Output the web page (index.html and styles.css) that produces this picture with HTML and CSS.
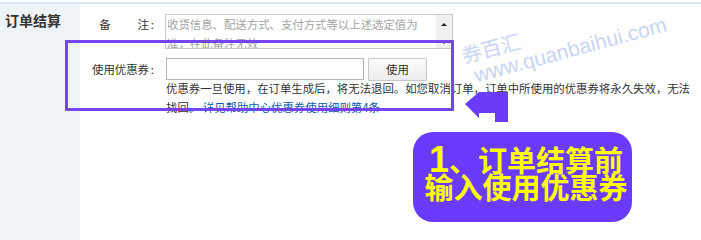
FILE: index.html
```html
<!DOCTYPE html>
<html lang="zh-CN">
<head>
<meta charset="utf-8">
<title>订单结算</title>
<link rel="stylesheet" href="styles.css">
</head>
<body>
<div class="order">
  <div class="side">
    <h2 class="side-title">订单结算</h2>
  </div>
  <div class="main">
    <div class="row row-remark">
      <div class="label">备<span class="label-gap"></span>注<span class="colon">:</span></div>
      <div class="textarea">
        <div class="textarea-text">收货信息、配送方式、支付方式等以上述选定值为准，在此备注无效</div>
        <div class="scrollbar">
          <span class="arrow-up"></span>
          <span class="arrow-down"></span>
        </div>
      </div>
    </div>
    <div class="row row-coupon">
      <div class="label">使用优惠券<span class="colon">:</span></div>
      <div class="coupon-input"></div>
      <button class="btn" type="button">使用</button>
    </div>
    <div class="note">优惠券一旦使用，在订单生成后，将无法退回。如您取消订单，订单中所使用的优惠券将永久失效，无法找回。 <a class="note-link" href="#">详见帮助中心优惠券使用细则第4条</a></div>
  </div>
</div>

<div class="wm wm-cn">券百汇</div>
<div class="wm wm-en">www.quanbaihui.com</div>

<div class="highlight"></div>
<svg class="pointer" width="44" height="31" viewBox="0 0 44 31">
  <polygon points="0,13 14,1 43,1 43,31 30,31 30,22 14,22 14,27" fill="#6a3cf8"/>
</svg>
<div class="callout">
  <div class="callout-line"><span class="callout-num">1</span>、订单结算前</div>
  <div class="callout-line">输入使用优惠券</div>
</div>
</body>
</html>
```
FILE: styles.css
```css
html, body {
  margin: 0;
  padding: 0;
  background: #ffffff;
}

body {
  position: relative;
  width: 701px;
  height: 240px;
  overflow: hidden;
  font-family: "Noto Sans CJK SC", "Liberation Sans", sans-serif;
  font-size: 11.4px;
  color: #333333;
}

.order {
  margin-top: 2px;
  border-top: 2px solid #dce6f2;
  display: flex;
  min-height: 236px;
}

.side {
  width: 80px;
  flex: none;
  background: #eef3f8;
}

.side-title {
  margin: 0;
  padding: 6px 0 0 5px;
  font-size: 14px;
  line-height: 20px;
  font-weight: bold;
  color: #333333;
}

.main {
  flex: 1;
  padding-top: 10px;
  padding-right: 4px;
}

.row {
  display: flex;
}

.label {
  width: 86px;
  flex: none;
  display: flex;
  justify-content: flex-end;
  padding-right: 12px;
  box-sizing: border-box;
  line-height: 19px;
  color: #333333;
  white-space: nowrap;
}

.colon {
  display: inline-block;
  width: 5px;
  text-align: right;
}

.label-gap {
  display: inline-block;
  width: 27px;
}

.row-remark .label {
  padding-top: 1px;
}

.textarea {
  box-sizing: border-box;
  width: 288px;
  height: 35px;
  margin-left: -1px;
  border: 1px solid #c9c9c9;
  display: flex;
  justify-content: space-between;
  overflow: hidden;
  background: #ffffff;
}

.textarea-text {
  width: 258px;
  padding-left: 1px;
  line-height: 19px;
  color: #a3a3a3;
}

.scrollbar {
  width: 16px;
  flex: none;
  background: #f0f0f0;
  display: flex;
  flex-direction: column;
  align-items: center;
  justify-content: space-between;
  padding: 8px 0 4px;
  box-sizing: border-box;
}

.arrow-up {
  width: 0;
  height: 0;
  border-left: 3px solid transparent;
  border-right: 3px solid transparent;
  border-bottom: 3px solid #222222;
}

.arrow-down {
  width: 0;
  height: 0;
  border-left: 3px solid transparent;
  border-right: 3px solid transparent;
  border-top: 3px solid #222222;
}

.row-coupon {
  margin-top: 9px;
  align-items: center;
  height: 22px;
}

.coupon-input {
  box-sizing: border-box;
  width: 198px;
  height: 22px;
  border: 1px solid #b5b5b5;
  background: #ffffff;
}

.btn {
  box-sizing: border-box;
  margin-left: 4px;
  width: 59px;
  height: 23px;
  border: 1px solid #c8c8c8;
  border-radius: 1px;
  background: linear-gradient(#fbfbfb, #ececec);
  font-family: inherit;
  font-size: 11.4px;
  color: #333333;
  padding: 0;
}

.note {
  margin-left: 86px;
  margin-top: -1px;
  line-height: 19px;
  color: #333333;
}

.note-link {
  color: #0b5bab;
  text-decoration: none;
}

.wm {
  position: absolute;
  color: #c8d5f3;
  transform: rotate(-15deg);
  white-space: nowrap;
  line-height: 24px;
}

.wm-cn {
  left: 461px;
  top: 36px;
  font-size: 20px;
  font-family: "Noto Sans CJK SC", sans-serif;
}

.wm-en {
  left: 471px;
  top: 38px;
  font-size: 21px;
  font-family: "Liberation Sans", sans-serif;
}

.highlight {
  position: absolute;
  left: 65px;
  top: 40px;
  width: 383px;
  height: 65px;
  border: 3px solid #7545f2;
}

.pointer {
  position: absolute;
  left: 465px;
  top: 91px;
}

.callout {
  position: absolute;
  left: 413px;
  top: 132px;
  box-sizing: border-box;
  width: 219px;
  height: 90px;
  border-radius: 20px;
  background: #6a3bfd;
  padding: 14px 0 0 7px;
  text-align: center;
  color: #ffff00;
  font-family: "Noto Sans CJK SC", sans-serif;
  font-weight: bold;
  font-size: 29px;
}

.callout-line {
  height: 27px;
  line-height: 27px;
  white-space: nowrap;
}

.callout-num {
  font-family: "Liberation Sans", sans-serif;
  font-size: 36px;
  line-height: 0;
}
```
